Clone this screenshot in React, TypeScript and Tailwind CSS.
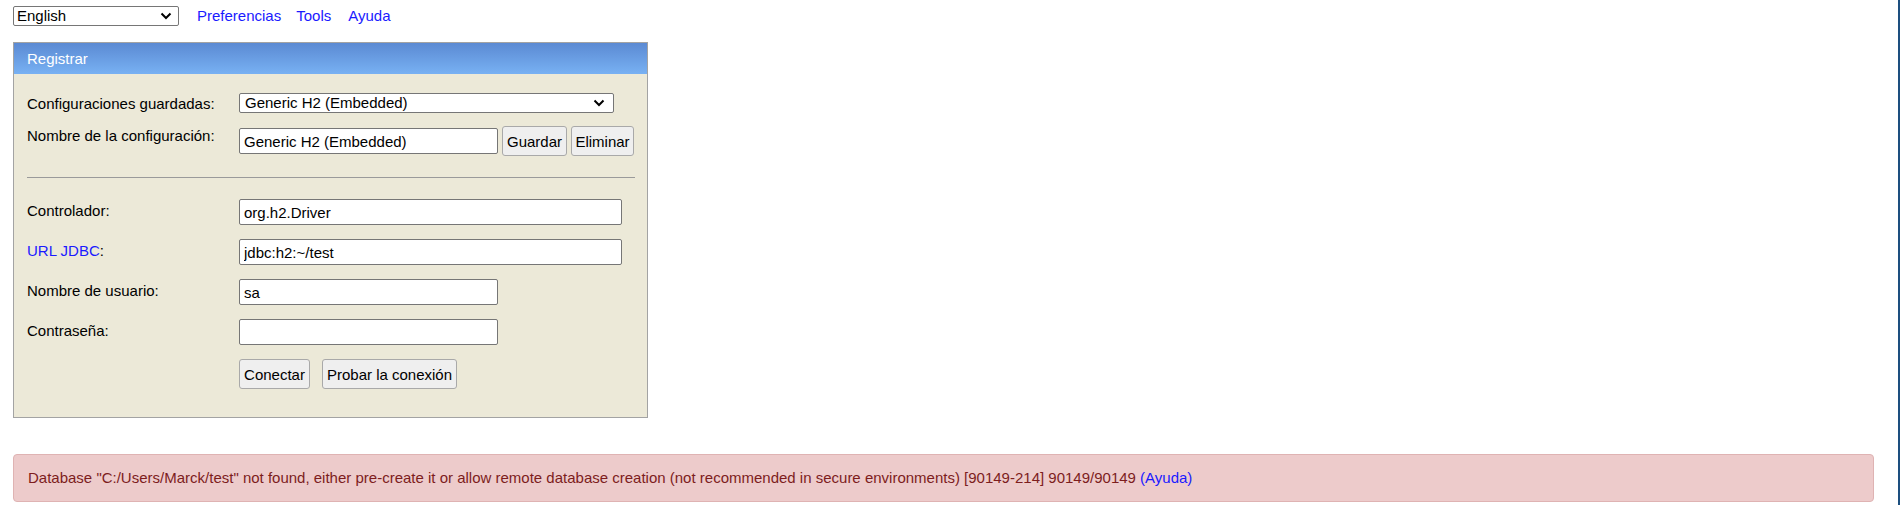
import React from "react";

const font = { fontFamily: '"Liberation Sans", Arial, sans-serif' };

function Label({ children, blue }: { children: React.ReactNode; blue?: boolean }) {
  return (
    <div className="w-[212px] shrink-0 text-[15px] leading-[17px] text-black">
      {blue ? (
        <>
          <span className="text-[#1a1aff]">{children}</span>:
        </>
      ) : (
        children
      )}
    </div>
  );
}

function Btn({ children, w }: { children: React.ReactNode; w: string }) {
  return (
    <button
      className={`${w} h-[30px] shrink-0 rounded-[3px] border border-[#a9a9a9] bg-[#efefef] text-[15px] leading-[17px] text-black text-center px-0`}
    >
      {children}
    </button>
  );
}

function TextInput({ value, w }: { value: string; w: string }) {
  return (
    <input
      readOnly
      value={value}
      className={`${w} h-[26px] shrink-0 rounded-[2px] border border-[#767676] bg-white px-[4px] text-[15px] text-black outline-none`}
    />
  );
}

function Chevron() {
  return (
    <svg width="12" height="8" viewBox="0 0 12 8" className="shrink-0">
      <path d="M1.5 1.5 L6 6 L10.5 1.5" fill="none" stroke="#000" strokeWidth="2" />
    </svg>
  );
}

export default function App() {
  return (
    <div className="relative min-h-[505px] w-full bg-white" style={font}>
      <div className="pt-[6px] pl-[13px] pr-[27px]">
        <div className="flex h-[20px] items-center">
          <div className="flex h-[20px] w-[166px] items-center justify-between rounded-[2px] border border-[#767676] bg-white pl-[3px] pr-[6px] text-[15px] text-black">
            <span>English</span>
            <Chevron />
          </div>
          <a className="ml-[18px] text-[15px] text-[#1a1aff]">Preferencias</a>
          <a className="ml-[15px] text-[15px] text-[#1a1aff]">Tools</a>
          <a className="ml-[17px] text-[15px] text-[#1a1aff]">Ayuda</a>
        </div>

        <div className="mt-[16px] w-[635px] border border-[#a3a3a3] bg-[#ece9d8]">
          <div className="flex h-[31px] items-center bg-gradient-to-b from-[#5b8ad3] to-[#78b1f3] pl-[13px] pt-[1px] text-[15px] text-white">
            Registrar
          </div>
          <div className="pl-[13px] pr-[12px] pb-[28px]">
            <div className="mt-[19px] flex items-center">
              <Label>Configuraciones guardadas:</Label>
              <div className="flex h-[20px] w-[375px] items-center justify-between rounded-[2px] border border-[#767676] bg-white pl-[5px] pr-[8px] text-[15px] text-black">
                <span>Generic H2 (Embedded)</span>
                <Chevron />
              </div>
            </div>

            <div className="mt-[13px] flex items-start">
              <div className="pt-[1px]">
                <Label>Nombre de la configuración:</Label>
              </div>
              <div className="flex items-center">
                <TextInput value="Generic H2 (Embedded)" w="w-[259px]" />
                <div className="ml-[4px]">
                  <Btn w="w-[65px]">Guardar</Btn>
                </div>
                <div className="ml-[4px]">
                  <Btn w="w-[63px]">Eliminar</Btn>
                </div>
              </div>
            </div>

            <div className="mt-[21px] h-px w-full bg-[#9a9a9a]" />

            <div className="mt-[21px] flex flex-col gap-[14px]">
              <div className="flex items-start">
                <div className="pt-[3px]">
                  <Label>Controlador:</Label>
                </div>
                <TextInput value="org.h2.Driver" w="w-[383px]" />
              </div>
              <div className="flex items-start">
                <div className="pt-[3px]">
                  <Label blue>URL JDBC</Label>
                </div>
                <TextInput value="jdbc:h2:~/test" w="w-[383px]" />
              </div>
              <div className="flex items-start">
                <div className="pt-[3px]">
                  <Label>Nombre de usuario:</Label>
                </div>
                <TextInput value="sa" w="w-[259px]" />
              </div>
              <div className="flex items-start">
                <div className="pt-[3px]">
                  <Label>Contraseña:</Label>
                </div>
                <TextInput value="" w="w-[259px]" />
              </div>
              <div className="flex items-start">
                <div className="w-[212px] shrink-0" />
                <Btn w="w-[71px]">Conectar</Btn>
                <div className="ml-[12px]">
                  <Btn w="w-[135px]">Probar la conexión</Btn>
                </div>
              </div>
            </div>
          </div>
        </div>

        <div className="mt-[36px] flex h-[48px] w-[1861px] items-center rounded-[4px] border border-[#dfb3b3] bg-[#edcbcb] pl-[14px] text-[15px] text-[#7d1d1d]">
          <span>
            Database "C:/Users/Marck/test" not found, either pre-create it or allow remote database creation (not
            recommended in secure environments) [90149-214] 90149/90149{" "}
            <a className="text-[#1a1aff]">(Ayuda)</a>
          </span>
        </div>
      </div>
      <div className="absolute right-0 top-0 h-[505px] w-[2px] bg-[#1d4f7f]" />
    </div>
  );
}
